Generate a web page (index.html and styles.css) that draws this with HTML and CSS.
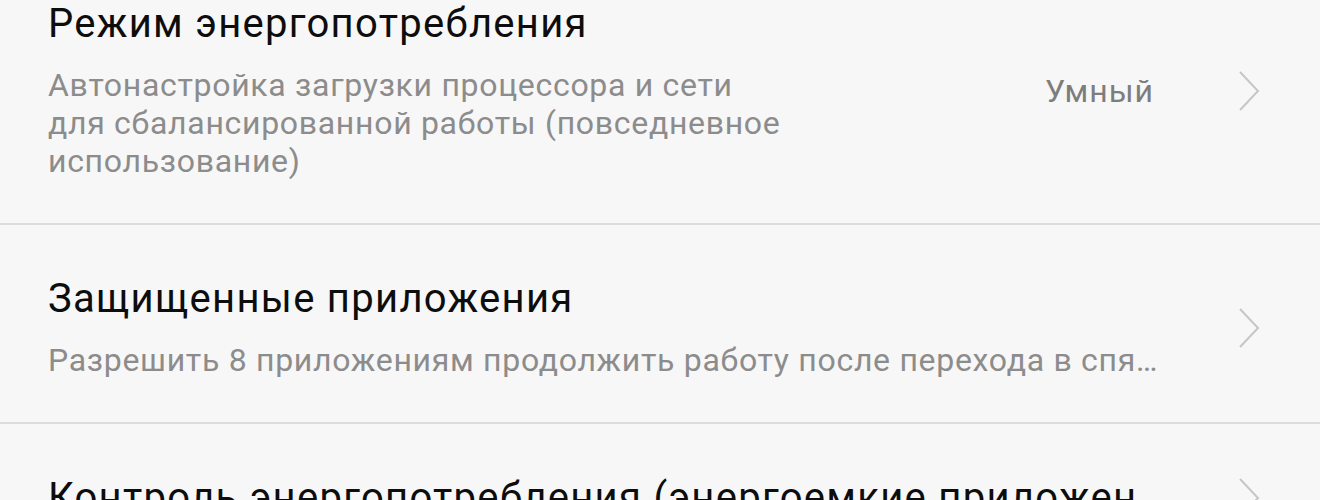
FILE: index.html
```html
<!DOCTYPE html>
<html lang="ru">
<head>
  <meta charset="UTF-8" />
  <meta name="viewport" content="width=device-width, initial-scale=1.0" />
  <title>Батарея</title>
  <link rel="stylesheet" href="styles.css">
</head>
<body>

  <div class="list">
    <div class="row">
      <div class="text">
        <div class="title">Режим энергопотребления</div>
        <div class="sub wrap">Автонастройка загрузки процессора и сети для сбалансированной работы (повседневное использование)</div>
      </div>
      <div class="value">Умный</div>
      <svg class="chev" width="24" height="44" viewBox="0 0 24 44"><polyline points="3,3 21,22 3,41" /></svg>
    </div>

    <div class="row">
      <div class="text">
        <div class="title">Защищенные приложения</div>
        <div class="sub clip">Разрешить 8 приложениям продолжить работу после перехода в спящий режим</div>
      </div>
      <svg class="chev" width="24" height="44" viewBox="0 0 24 44"><polyline points="3,3 21,22 3,41" /></svg>
    </div>

    <div class="row">
      <div class="text">
        <div class="title">Контроль энергопотребления (энергоемкие приложения)</div>
      </div>
      <svg class="chev" width="24" height="44" viewBox="0 0 24 44"><polyline points="3,3 21,22 3,41" /></svg>
    </div>
  </div>

</body>
</html>
```

FILE: styles.css
```css
body {
  font-family: Roboto, 'Liberation Sans', sans-serif;
  background: #f7f7f7;
  color: #0d0d0d;
  margin: 0;
  overflow: hidden;
}
.list {
  margin-top: -50px;
}
.row {
  display: flex;
  align-items: center;
  padding: 51px 61px 43px 48px;
  border-bottom: 2px solid #dcdcdc;
}
.text {
  flex: 1;
  min-width: 0;
  padding-right: 60px;
}
.title {
  font-size: 40px;
  line-height: 46px;
  letter-spacing: 1.3px;
  white-space: nowrap;
  overflow: hidden;
  text-overflow: ellipsis;
}
.sub {
  font-size: 32px;
  line-height: 38px;
  letter-spacing: 0.7px;
  color: #8c8c8c;
  margin-top: 19px;
}
.sub.wrap {
  max-width: 746px;
}
.sub.clip {
  white-space: nowrap;
  overflow: hidden;
  text-overflow: ellipsis;
}
.value {
  font-size: 32px;
  letter-spacing: 1px;
  color: #7d7d7d;
  margin-right: 83px;
}
.chev {
  flex: none;
  margin-right: -2px;
}
.chev polyline {
  fill: none;
  stroke: #c6c6c6;
  stroke-width: 2;
}
```
